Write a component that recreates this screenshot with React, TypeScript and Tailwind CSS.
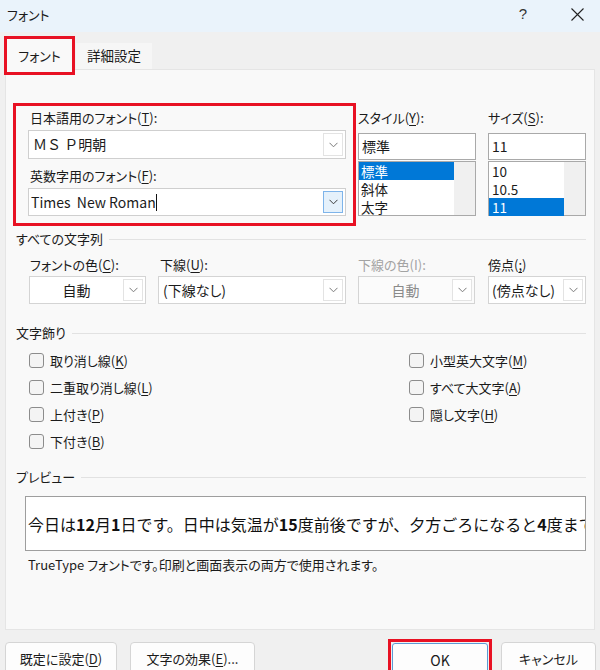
import React from 'react';

const jp = "font-['Noto_Sans_CJK_JP','Noto_Sans',sans-serif] [font-feature-settings:'palt']";

function Chevron({ color = '#6b6b6b' }: { color?: string }) {
  return (
    <svg width="9" height="6" viewBox="0 0 9 6">
      <polyline points="0.5,0.8 4.5,4.8 8.5,0.8" fill="none" stroke={color} strokeWidth="1" />
    </svg>
  );
}

function DropButton({ focused }: { focused?: boolean }) {
  return (
    <div
      className={
        focused
          ? 'my-[2px] mr-[2px] w-[20px] flex items-center justify-center bg-[#e5f1fb] border border-[#7eb4ea]'
          : 'my-[2px] mr-[2px] w-[20px] flex items-center justify-center bg-white border border-[#e3e3e3]'
      }
    >
      <Chevron color={focused ? '#3a3a3a' : '#7a7a7a'} />
    </div>
  );
}

function Label({ children, gray }: { children: React.ReactNode; gray?: boolean }) {
  return (
    <div className={gray ? 'h-[20px] leading-[20px] text-[13px] text-[#a3a3a3]' : 'h-[20px] leading-[20px] text-[13px] text-[#1b1b1b]'}>
      {children}
    </div>
  );
}

function U({ children }: { children: React.ReactNode }) {
  return <span className="underline underline-offset-[2px]">{children}</span>;
}

function Check({ children }: { children: React.ReactNode }) {
  return (
    <div className="h-[27px] flex items-center">
      <div className="w-[15px] h-[15px] rounded-[3px] border border-[#8c8c8c] bg-[#f4f4f4]" />
      <span className="ml-[6px] text-[13px] text-[#1b1b1b]">{children}</span>
    </div>
  );
}

function Button({ children, className }: { children: React.ReactNode; className: string }) {
  return (
    <div className={'h-[34px] rounded-[4px] bg-[#fdfdfd] border border-[#d5d5d5] flex items-center justify-center text-[13px] text-[#1b1b1b] ' + className}>
      {children}
    </div>
  );
}

export default function App() {
  return (
    <div className={'w-[600px] h-[670px] overflow-hidden bg-[#f0f0f0] text-[#1b1b1b] ' + jp}>
      {/* title bar */}
      <div className="h-[32px] bg-[#eaf3fb] flex items-center">
        <span className="ml-[7px] text-[13px] -mt-[3px]">フォント</span>
        <span className="ml-auto text-[15px] text-[#333] -mt-[4px] font-['Liberation_Sans',sans-serif]">?</span>
        <svg className="ml-[44px] mr-[16px] -mt-[3px]" width="13" height="13" viewBox="0 0 13 13">
          <path d="M0.5 0.5 L12.5 12.5 M12.5 0.5 L0.5 12.5" stroke="#222" strokeWidth="1.1" />
        </svg>
      </div>

      {/* tabs */}
      <div className="h-[37px] flex items-start pl-[4px]">
        <div className="relative z-10 mt-[4px] w-[71px] h-[39px] border-[3px] border-[#e81123] bg-[#f9f9f9] flex justify-center pt-[7px] text-[13px]">
          フォント
        </div>
        <div className="ml-[1px] mt-[11px] w-[76px] h-[26px] bg-[#f6f6f6] flex items-center justify-center text-[13.5px] leading-none">
          詳細設定
        </div>
      </div>

      {/* panel */}
      <div className="mx-[5px] h-[561px] bg-[#f9f9f9] border border-[#e5e5e5] pt-[33px] pl-[7px]">
        <div className="flex">
          <div className="w-[343px] h-[123px] border-[3px] border-[#e81123] pl-[12px] pt-[2px]">
            <div className="pl-[2px]">
              <Label>
                日本語用のフォント(<U>T</U>):
              </Label>
            </div>
            <div className="mt-[2px] w-[318px] h-[29px] bg-white border border-[#cfcfcf] flex">
              <div className="flex-1 pl-[4px] flex items-center text-[14px] [font-feature-settings:normal]">ＭＳ Ｐ明朝</div>
              <DropButton />
            </div>
            <div className="mt-[7px] pl-[2px]">
              <Label>
                英数字用のフォント(<U>F</U>):
              </Label>
            </div>
            <div className="mt-[2px] w-[318px] h-[28px] bg-white border border-[#cfcfcf] flex">
              <div className="flex-1 pl-[2px] flex items-center text-[14px]">
                Times&nbsp; New Roman<span className="inline-block w-px h-[17px] bg-[#111]" />
              </div>
              <DropButton focused />
            </div>
          </div>

          <div className="ml-[2px] w-[118px] pt-[5px]">
            <Label>
              スタイル(<U>Y</U>):
            </Label>
            <div className="mt-[5px] h-[27px] bg-white border border-[#a9a9a9] pl-[3px] flex items-center text-[14px]">標準</div>
            <div className="mt-[1px] h-[55px] bg-white border border-[#a9a9a9] flex text-[13.5px]">
              <div className="flex-1 flex flex-col">
                <div className="h-[18px] leading-[18px] bg-[#0078d7] text-white pl-[2px]">標準</div>
                <div className="h-[18px] leading-[18px] pl-[2px]">斜体</div>
                <div className="h-[18px] leading-[18px] pl-[2px]">太字</div>
              </div>
              <div className="w-[21px] bg-[#f0f0f0]" />
            </div>
          </div>

          <div className="ml-[12px] w-[98px] pt-[5px]">
            <Label>
              サイズ(<U>S</U>):
            </Label>
            <div className="mt-[5px] h-[27px] bg-white border border-[#a9a9a9] pl-[3px] flex items-center text-[14px]">11</div>
            <div className="mt-[1px] h-[55px] bg-white border border-[#a9a9a9] flex text-[13.5px]">
              <div className="flex-1 flex flex-col">
                <div className="h-[18px] leading-[18px] pl-[3px]">10</div>
                <div className="h-[18px] leading-[18px] pl-[3px]">10.5</div>
                <div className="h-[18px] leading-[18px] bg-[#0078d7] text-white pl-[3px]">11</div>
              </div>
              <div className="w-[21px] bg-[#f0f0f0]" />
            </div>
          </div>
        </div>

        {/* all text */}
        <div className="mt-[3px] ml-[3px] w-[570px] h-[20px] flex items-center">
          <span className="text-[13px]">すべての文字列</span>
          <div className="flex-1 ml-[6px] h-px bg-[#e2e2e2]" />
        </div>
        <div className="mt-[6px] flex">
          <div className="ml-[16px] w-[117px]">
            <div className="pl-[1px]">
              <Label>
                フォントの色(<U>C</U>):
              </Label>
            </div>
            <div className="mt-[1px] h-[28px] bg-white border border-[#d4d4d4] flex">
              <div className="flex-1 flex items-center justify-center text-[14px]">自動</div>
              <DropButton />
            </div>
          </div>
          <div className="ml-[12px] w-[188px]">
            <div className="pl-[2px]">
              <Label>
                下線(<U>U</U>):
              </Label>
            </div>
            <div className="mt-[1px] h-[28px] bg-white border border-[#d4d4d4] flex">
              <div className="flex-1 pl-[4px] flex items-center text-[14px]">(下線なし)</div>
              <DropButton />
            </div>
          </div>
          <div className="ml-[12px] w-[117px]">
            <Label gray>下線の色(I):</Label>
            <div className="mt-[1px] h-[28px] bg-[#fbfbfb] border border-[#d4d4d4] flex">
              <div className="flex-1 flex items-center justify-center text-[14px] text-[#8a8a8a]">自動</div>
              <DropButton />
            </div>
          </div>
          <div className="ml-[13px] w-[98px]">
            <Label>
              傍点(<U>;</U>)
            </Label>
            <div className="mt-[1px] h-[28px] bg-white border border-[#d4d4d4] flex">
              <div className="flex-1 pl-[3px] flex items-center text-[14px]">(傍点なし)</div>
              <DropButton />
            </div>
          </div>
        </div>

        {/* decorations */}
        <div className="mt-[19px] ml-[3px] w-[570px] h-[20px] flex items-center">
          <span className="text-[13px]">文字飾り</span>
          <div className="flex-1 ml-[6px] h-px bg-[#e2e2e2]" />
        </div>
        <div className="mt-[4px] ml-[16px] flex">
          <div className="w-[380px]">
            <Check>
              取り消し線(<U>K</U>)
            </Check>
            <Check>
              二重取り消し線(<U>L</U>)
            </Check>
            <Check>
              上付き(<U>P</U>)
            </Check>
            <Check>
              下付き(<U>B</U>)
            </Check>
          </div>
          <div>
            <Check>
              小型英大文字(<U>M</U>)
            </Check>
            <Check>
              すべて大文字(<U>A</U>)
            </Check>
            <Check>
              隠し文字(<U>H</U>)
            </Check>
          </div>
        </div>

        {/* preview */}
        <div className="mt-[12px] ml-[3px] w-[570px] h-[20px] flex items-center">
          <span className="text-[13px]">プレビュー</span>
          <div className="flex-1 ml-[6px] h-px bg-[#e2e2e2]" />
        </div>
        <div className="mt-[9px] ml-[12px] w-[561px] h-[55px] bg-white border border-[#9e9e9e] overflow-hidden flex items-center">
          <div className="pl-[2px] whitespace-nowrap text-[16px] text-[#111] [font-feature-settings:normal]">
            今日は<b className="font-semibold">12</b>月<b className="font-semibold">1</b>日です。日中は気温が<b className="font-semibold">15</b>度前後ですが、夕方ごろになると<b className="font-semibold">4</b>度まで
          </div>
        </div>
        <div className="mt-[4px] ml-[15px] h-[20px] leading-[20px] text-[13px]">
          TrueType フォントです。印刷と画面表示の両方で使用されます。
        </div>
      </div>

      {/* buttons */}
      <div className="flex items-start">
        <Button className="mt-[12px] ml-[5px] w-[112px]">
          既定に設定(<U>D</U>)
        </Button>
        <Button className="mt-[12px] ml-[13px] w-[125px]">
          文字の効果(<U>E</U>)...
        </Button>
        <div className="mt-[9px] ml-[133px] w-[104px] border-[3px] border-[#e81123] p-px">
          <div className="h-[34px] rounded-[3px] bg-[#fdfdfd] border border-[#5b9bd5] flex items-center justify-center text-[14px]">OK</div>
        </div>
        <Button className="mt-[12px] ml-[9px] w-[95px]">キャンセル</Button>
      </div>
    </div>
  );
}
